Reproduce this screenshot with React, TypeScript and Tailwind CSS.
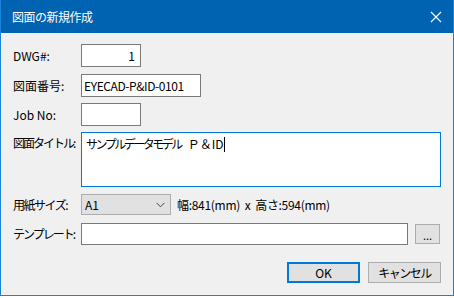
import React from "react";

export default function App() {
  return (
    <div className="w-[454px] h-[298px] bg-white font-['Noto_Sans_CJK_JP','Noto_Sans',sans-serif] text-[12px] text-black leading-[16px]">
      <div className="w-[454px] h-[296px] flex flex-col border-x border-b border-[#1883d7]">
        <div className="h-[33px] bg-[#0063b1] flex items-center justify-between pl-[11px] pr-[11px] shrink-0">
          <span className="text-white text-[12px] tracking-[-0.5px]">図面の新規作成</span>
          <svg width="12" height="12" viewBox="0 0 12 12">
            <path d="M1 1 L11 11 M11 1 L1 11" stroke="white" strokeWidth="1.1" fill="none" />
          </svg>
        </div>
        <div className="flex-1 bg-[#f0f0f0] pt-[11px] pl-[12px] pr-[11px] flex flex-col">
          <div className="flex items-center h-[23px]">
            <div className="w-[68px] whitespace-nowrap">DWG#:</div>
            <div className="w-[60px] h-[23px] border border-[#7a7a7a] bg-white flex items-center justify-end pr-[5px]">1</div>
          </div>
          <div className="flex items-center h-[23px] mt-[7px]">
            <div className="w-[68px] whitespace-nowrap">図面番号:</div>
            <div className="w-[120px] h-[23px] border border-[#7a7a7a] bg-white flex items-center pl-[2px] tracking-[-0.4px]">EYECAD-P&amp;ID-0101</div>
          </div>
          <div className="flex items-center h-[23px] mt-[6px]">
            <div className="w-[68px] whitespace-nowrap">Job No:</div>
            <div className="w-[60px] h-[23px] border border-[#7a7a7a] bg-white"></div>
          </div>
          <div className="flex items-start mt-[6px]">
            <div className="w-[68px] pt-[3px] whitespace-nowrap tracking-[-2px]">図面タイトル:</div>
            <div className="w-[360px] h-[55px] border border-[#0078d7] bg-white pl-[4px] pt-[3px] flex items-start whitespace-nowrap">
              <span className="tracking-[-2.5px]">サンプルデータモデル</span>
              <span className="ml-[7px]">Ｐ＆ID</span>
              <span className="inline-block w-[1px] h-[15px] bg-black ml-[1px] mt-[1px]"></span>
            </div>
          </div>
          <div className="flex items-center h-[21px] mt-[7px]">
            <div className="w-[68px] whitespace-nowrap tracking-[-1.5px]">用紙サイズ:</div>
            <div className="w-[90px] h-[21px] border border-[#adadad] bg-[#e1e1e1] flex items-center justify-between pl-[3px] pr-[5px]">
              <span>A1</span>
              <svg width="9" height="6" viewBox="0 0 9 6">
                <path d="M0.5 0.8 L4.5 4.8 L8.5 0.8" stroke="#444" strokeWidth="1" fill="none" />
              </svg>
            </div>
            <div className="ml-[6px] whitespace-nowrap tracking-[-0.3px]">幅:841(mm)&nbsp; x&nbsp; 高さ:594(mm)</div>
          </div>
          <div className="flex items-center h-[22px] mt-[8px]">
            <div className="w-[68px] whitespace-nowrap tracking-[-2px]">テンプレート:</div>
            <div className="w-[327px] h-[22px] border border-[#7a7a7a] bg-white"></div>
            <div className="ml-[7px] w-[25px] h-[20px] border border-[#adadad] bg-[#e1e1e1] flex items-center justify-center text-[11px] leading-[11px] pt-[2px]">...</div>
          </div>
          <div className="flex justify-end mt-[17px] mr-[1px]">
            <div className="w-[73px] h-[21px] border-2 border-[#0078d7] bg-[#e1e1e1] flex items-center justify-center">OK</div>
            <div className="ml-[8px] w-[73px] h-[21px] border border-[#adadad] bg-[#e1e1e1] flex items-center justify-center tracking-[-1.5px]">キャンセル</div>
          </div>
        </div>
      </div>
    </div>
  );
}
